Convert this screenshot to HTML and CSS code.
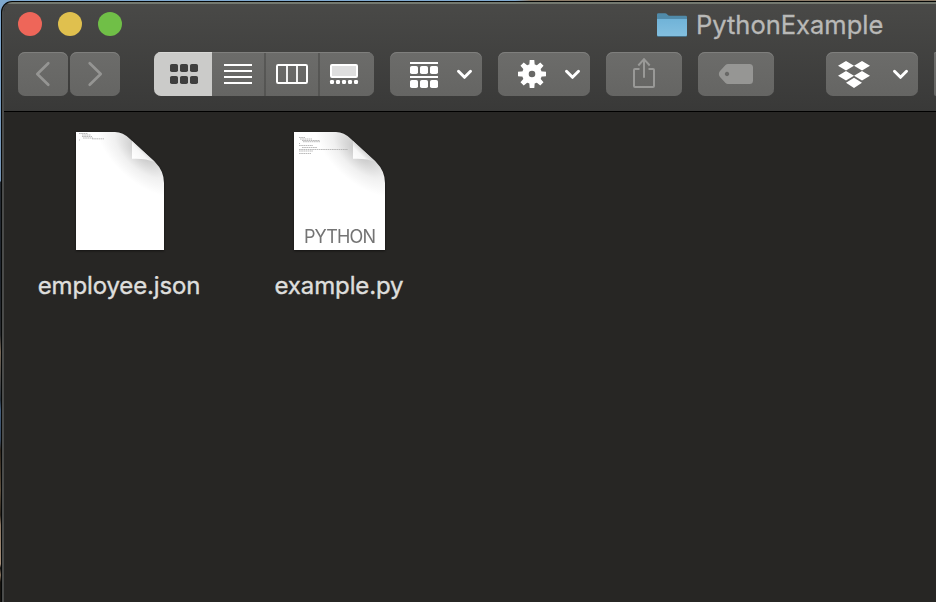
FILE: index.html
```html
<!DOCTYPE html>
<html lang="en">
<head>
<meta charset="utf-8">
<title>PythonExample</title>
<link rel="stylesheet" href="styles.css">
</head>
<body>
<main class="window">
  <header class="header">
    <div class="titlebar">
      <div class="lights"><span class="light red"></span><span class="light yellow"></span><span class="light green"></span></div>
      <h1 class="title">
        <svg class="folder" width="30" height="25" viewBox="0 0 30 25">
          <defs><linearGradient id="fold" x1="0" y1="0" x2="0" y2="1"><stop offset="0" stop-color="#70b3d8"/><stop offset="1" stop-color="#83bfdf"/></linearGradient></defs>
          <path d="M0 4V1.5Q0 .3 1.3.3H8Q9.3.3 10.3 1.5T13 2.8H28.7Q30 2.8 30 4V6H0Z" fill="#508baa"/>
          <path d="M0 5H30V22.6Q30 23.8 28.8 23.8H1.2Q0 23.8 0 22.6Z" fill="#487f9e"/>
          <path d="M0 5.7H30V21.8Q30 23 28.8 23H1.2Q0 23 0 21.8Z" fill="url(#fold)"/>
        </svg>
        <span class="title-text">PythonExample</span>
      </h1>
    </div>
    <nav class="toolbar">
      <div class="nav-pair">
        <button class="btn nav"><svg width="50" height="44" fill="none" stroke="#959593" stroke-width="2.7" stroke-linecap="round" stroke-linejoin="round"><path d="M30.3 11.3L19.3 22L30.3 32.7"/></svg></button>
        <button class="btn nav"><svg width="50" height="44" fill="none" stroke="#959593" stroke-width="2.7" stroke-linecap="round" stroke-linejoin="round"><path d="M19.7 11.3L30.7 22L19.7 32.7"/></svg></button>
      </div>
      <div class="views">
        <button class="seg active"><svg width="58" height="44" fill="#3f3f3e"><rect x="16" y="12" width="8" height="8" rx="1.8"/><rect x="26" y="12" width="8" height="8" rx="1.8"/><rect x="36" y="12" width="8" height="8" rx="1.8"/><rect x="16" y="24" width="8" height="8" rx="1.8"/><rect x="26" y="24" width="8" height="8" rx="1.8"/><rect x="36" y="24" width="8" height="8" rx="1.8"/></svg></button>
        <button class="seg list"><svg width="52" height="44" fill="#fff"><path d="M12 12h28v2H12zM12 18h28v2H12zM12 24h28v2H12zM12 30h28v2H12z"/></svg></button>
        <button class="seg"><svg width="52" height="44" fill="none" stroke="#fff" stroke-width="2"><rect x="11" y="13" width="30" height="18" rx="1.2"/><path d="M21 13v18M31 13v18" stroke-width="1.8"/></svg></button>
        <button class="seg"><svg width="54" height="44" fill="#fff"><rect x="11" y="13" width="26" height="12" rx="1" fill="#dedede" stroke="#fff" stroke-width="2"/><rect x="10" y="28" width="4" height="4" rx="1.2"/><rect x="16" y="28" width="4" height="4" rx="1.2"/><rect x="22" y="28" width="4" height="4" rx="1.2"/><rect x="28" y="28" width="4" height="4" rx="1.2"/><rect x="34" y="28" width="4" height="4" rx="1.2"/></svg></button>
      </div>
      <button class="btn menu"><svg width="92" height="44" fill="#fff"><path d="M20 10h28v2H20zM20 24h28v2H20z"/><rect x="20" y="14" width="8" height="8" rx="1.8"/><rect x="30" y="14" width="8" height="8" rx="1.8"/><rect x="40" y="14" width="8" height="8" rx="1.8"/><rect x="20" y="28" width="8" height="8" rx="1.8"/><rect x="30" y="28" width="8" height="8" rx="1.8"/><rect x="40" y="28" width="8" height="8" rx="1.8"/><path class="chevron" d="M68.5 19.3L74.5 25.3L80.5 19.3"/></svg></button>
      <button class="btn menu"><svg width="92" height="44" fill="#fff">
        <g transform="translate(34 22)"><circle r="6.6" fill="none" stroke="#fff" stroke-width="6.6"/>
          <g><path id="tooth" d="M-2.8-8L-2.3-14H2.3L2.8-8ZM-2.8 8L-2.3 14H2.3L2.8 8Z"/><use href="#tooth" transform="rotate(45)"/><use href="#tooth" transform="rotate(90)"/><use href="#tooth" transform="rotate(135)"/></g></g>
        <path class="chevron" d="M68.5 19.3L74.5 25.3L80.5 19.3"/></svg></button>
      <button class="btn single"><svg width="76" height="44" fill="none" stroke="#999997" stroke-width="2"><path d="M33.5 17H29Q28 17 28 18V34Q28 35 29 35H47Q48 35 48 34V18Q48 17 47 17H42.5"/><path d="M38 25.8V8M32.3 13.5L38 7.2L43.7 13.5"/></svg></button>
      <button class="btn single"><svg width="76" height="44" fill="#969694"><path fill-rule="evenodd" d="M30 12H51.5Q55 12 55 15.5V28.5Q55 32 51.5 32H30Q28.5 32 27.5 31L22 25Q19.7 22 22 19L27.5 13Q28.5 12 30 12ZM29 19.8a2.2 2.2 0 1 0 .01 0Z"/></svg></button>
      <button class="btn menu dropbox"><svg width="92" height="44" fill="#fff"><path d="M20 9L28 13.8L20 18.6L12 13.8ZM36 9L44 13.8L36 18.6L28 13.8ZM20 19L28 23.8L20 28.6L12 23.8ZM36 19L44 23.8L36 28.6L28 23.8ZM28 25.8L36 30.8L28 36L20 30.8Z"/><path class="chevron" d="M68.5 19.3L74.5 25.3L80.5 19.3"/></svg></button>
      <button class="btn edge"></button>
    </nav>
  </header>
  <section class="files">
    <figure class="file json">
      <svg class="doc" width="98" height="130" viewBox="-5 -5 98 130">
        <defs>
          <radialGradient id="shade" gradientUnits="userSpaceOnUse" cx="0" cy="0" r="1" gradientTransform="translate(67 19) rotate(43) scale(58 30)"><stop offset="0" stop-color="#bdbdbd"/><stop offset=".3" stop-color="#d6d6d6"/><stop offset=".6" stop-color="#f0f0f0"/><stop offset="1" stop-color="#fff"/></radialGradient>
          <linearGradient id="curl" gradientUnits="userSpaceOnUse" x1="57" y1="27" x2="67" y2="17"><stop offset="0" stop-color="#fff"/><stop offset=".7" stop-color="#f6f6f6"/><stop offset="1" stop-color="#d9d9d9"/></linearGradient>
        </defs>
        <path class="paper" d="M0 0H39Q47 0 54 7L79 30Q88 39 88 51V118H0Z"/>
        <path d="M56 9V26.8Q69 26 79 30Z" fill="url(#curl)"/>
        <g class="code"><path d="M3 1.5h9M6 3h9M6 4.5h10M7 6h10M16 6.8h12M3 8h1"/></g>
      </svg>
      <figcaption class="name name-json">employee.json</figcaption>
    </figure>
    <figure class="file python">
      <svg class="doc" width="101" height="130" viewBox="-5 -5 101 130">
        <path class="paper" d="M0 0H42Q50 0 57 7L82 30Q91 39 91 51V118H0Z"/>
        <path d="M59 9V26.8Q72 26 82 30Z" fill="url(#curl)" />
        <g class="code"><path d="M5 5.5h6M6 7h12M8 8.5h18M9 9.7h17M5 11.5h1M5 13.5h14M8 15.5h15M5 17.5h49M5 19h14M5 21.5h12"/></g>
        <text class="kind" x="10" y="111" textLength="72">PYTHON</text>
      </svg>
      <figcaption class="name name-python">example.py</figcaption>
    </figure>
  </section>
</main>
</body>
</html>
```

FILE: styles.css
```css
* { box-sizing: border-box; }

body {
  margin: 0;
  height: 602px;
  padding: 2px 0 0 2px;
  overflow: hidden;
  font-family: Inter, "Liberation Sans", sans-serif;
  background:
    linear-gradient(90deg, #7fa9cf 0 515px, #8b7b68 530px) 0 0 / 100% 3px no-repeat,
    linear-gradient(#80a9d0 0, #7594b5 181px, #252a31 182px, #1e242d 270px, #282a2d 335px, #776756 352px, #28323d 400px, #435d7c 410px, #394a60 440px, #30271e 450px, #5f503e 490px, #2d261e 515px, #8c7763 525px, #a58d78 564px, #111 568px, #88735e 575px, #16130f 582px, #16130f 602px);
}

.window {
  height: 600px;
  border-left: 2px solid #4a4b4a;
  border-radius: 10px 0 0 0;
  background: #272624;
  box-shadow: 0 0 0 1px #050707;
  overflow: hidden;
}

.header {
  height: 110px;
  background: linear-gradient(#494947, #393938);
  border-top: 2px solid #747970;
  border-bottom: 1px solid #000;
}

.titlebar {
  height: 48px;
  display: flex;
  align-items: flex-start;
  padding: 8px 0 0 14px;
}

.lights { display: flex; gap: 16px; width: 639px; }
.light { width: 24px; height: 24px; border-radius: 50%; }
.red { background: #ee6659; }
.yellow { background: #e0c04e; }
.green { background: #70bf47; }

.title { display: flex; margin: 0; height: 26px; align-items: center; font-weight: 400; }
.title-text {
  margin-left: 9px;
  font-size: 25.5px;
  line-height: 26px;
  -webkit-text-stroke: .3px #b9b9b7;
  color: #b9b9b7;
  white-space: nowrap;
}

.toolbar { display: flex; gap: 16px; padding-left: 14px; }
.nav-pair { display: flex; gap: 2px; margin-right: 18px; }

button { display: block; flex: none; margin: 0; padding: 0; border: 0; font: inherit; }
button svg { display: block; }

.btn, .views {
  height: 44px;
  border-radius: 7px;
  background: linear-gradient(#6c6c6a, #656563);
  box-shadow: inset 0 1px 0 #7f7f7d;
  overflow: hidden;
}
.nav { width: 50px; }
.views { display: flex; gap: 2px; width: 220px; background: linear-gradient(#585856, #545452); }
.seg { height: 44px; background: linear-gradient(#6c6c6a, #656563); box-shadow: inset 0 1px 0 #7f7f7d; }
.active { background: #cbcbc9; box-shadow: inset 0 1px 0 #d8d8d6; }
.list { margin-left: -2px; }
.menu { width: 92px; }
.single { width: 76px; }
.edge { flex: 1; border-radius: 7px 0 0 7px; }
.dropbox { margin-left: 36px; }
.chevron { fill: none; stroke: #fff; stroke-width: 3; stroke-linecap: round; stroke-linejoin: round; }

.files { display: flex; gap: 26px; padding: 15px 0 0 14px; }
.file { display: flex; flex-direction: column; align-items: center; margin: 0; }
.json { width: 204px; }
.python { width: 182px; }
.doc { display: block; filter: drop-shadow(0 1px 1px rgba(0, 0, 0, .5)); }
.paper { fill: url(#shade); }
.code { fill: none; stroke: #aaa; stroke-width: .8; stroke-dasharray: 1.7 .5; }
.kind { font-size: 18px; fill: #747474; }
.name {
  margin-top: 11px;
  font-size: 24px;
  line-height: 36px;
  -webkit-text-stroke: .4px #dededc;
  color: #dededc;
  white-space: nowrap;
}
.name-json { letter-spacing: -.13px; margin-left: -2px; }
.name-python { letter-spacing: -.13px; }
```
